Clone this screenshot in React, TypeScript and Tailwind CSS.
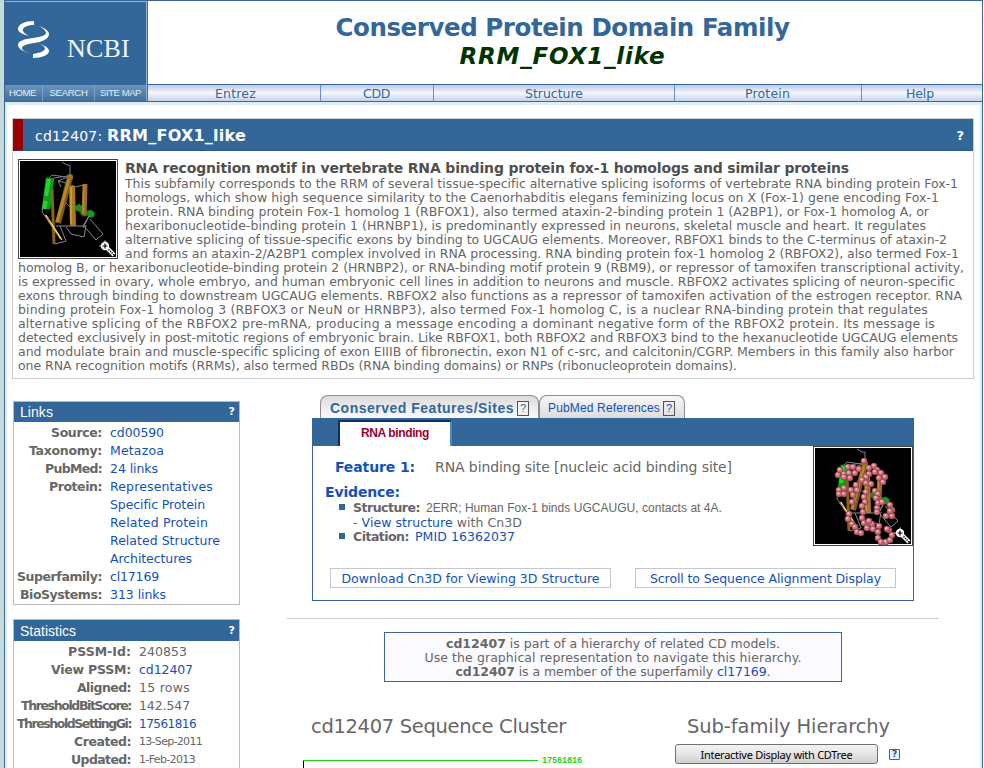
import { useLayoutEffect, useRef, type ReactNode } from "react";

/** Single line of text tracked out (or in) so that it spans `w` pixels. */
function Fit({ w, className = "", children }: { w: number; className?: string; children: ReactNode }) {
  const ref = useRef<HTMLSpanElement>(null);
  useLayoutEffect(() => {
    const el = ref.current;
    if (!el) return;
    el.style.letterSpacing = "normal";
    const natural = el.getBoundingClientRect().width;
    const count = (el.textContent ?? "").length;
    el.style.letterSpacing = `${(w - natural) / count}px`;
  }, [w]);
  return (
    <span ref={ref} className={"inline-block whitespace-pre " + className}>
      {children}
    </span>
  );
}

const nav: [string, number, string][] = [
  ["Entrez", 41, "w-[173px] pl-[3px]"],
  ["CDD", 27, "w-[113px] pr-px"],
  ["Structure", 58, "w-[241px]"],
  ["Protein", 45, "w-[187px] pr-px"],
  ["Help", 28, "w-[120px] pr-[4px]"],
];

const besideThumb: [string, number][] = [
  ["This subfamily corresponds to the RRM of several tissue-specific alternative splicing isoforms of vertebrate RNA binding protein Fox-1", 833],
  ["homologs, which show high sequence similarity to the Caenorhabditis elegans feminizing locus on X (Fox-1) gene encoding Fox-1", 814],
  ["protein. RNA binding protein Fox-1 homolog 1 (RBFOX1), also termed ataxin-2-binding protein 1 (A2BP1), or Fox-1 homolog A, or", 804],
  ["hexaribonucleotide-binding protein 1 (HRNBP1), is predominantly expressed in neurons, skeletal muscle and heart. It regulates", 801],
  ["alternative splicing of tissue-specific exons by binding to UGCAUG elements. Moreover, RBFOX1 binds to the C-terminus of ataxin-2", 822],
  ["and forms an ataxin-2/A2BP1 complex involved in RNA processing. RNA binding protein fox-1 homolog 2 (RBFOX2), also termed Fox-1", 834],
];

const belowThumb: [string, number][] = [
  ["homolog B, or hexaribonucleotide-binding protein 2 (HRNBP2), or RNA-binding motif protein 9 (RBM9), or repressor of tamoxifen transcriptional activity,", 946],
  ["is expressed in ovary, whole embryo, and human embryonic cell lines in addition to neurons and muscle. RBFOX2 activates splicing of neuron-specific", 937],
  ["exons through binding to downstream UGCAUG elements. RBFOX2 also functions as a repressor of tamoxifen activation of the estrogen receptor. RNA", 944],
  ["binding protein Fox-1 homolog 3 (RBFOX3 or NeuN or HRNBP3), also termed Fox-1 homolog C, is a nuclear RNA-binding protein that regulates", 910],
  ["alternative splicing of the RBFOX2 pre-mRNA, producing a message encoding a dominant negative form of the RBFOX2 protein. Its message is", 917],
  ["detected exclusively in post-mitotic regions of embryonic brain. Like RBFOX1, both RBFOX2 and RBFOX3 bind to the hexanucleotide UGCAUG elements", 940],
  ["and modulate brain and muscle-specific splicing of exon EIIIB of fibronectin, exon N1 of c-src, and calcitonin/CGRP. Members in this family also harbor", 936],
  ["one RNA recognition motifs (RRMs), also termed RBDs (RNA binding domains) or RNPs (ribonucleoprotein domains).", 719],
];

const links: [string, number, string, number][] = [
  ["Source:", 51, "cd00590", 54],
  ["Taxonomy:", 73, "Metazoa", 54],
  ["PubMed:", 57, "24 links", 48],
  ["Protein:", 53, "Representatives", 103],
  ["", 0, "Specific Protein", 95],
  ["", 0, "Related Protein", 98],
  ["", 0, "Related Structure", 110],
  ["", 0, "Architectures", 82],
  ["Superfamily:", 85, "cl17169", 49],
  ["BioSystems:", 82, "313 links", 56],
];

const stats: [string, number, string, number, string][] = [
  ["PSSM-Id:", 63, "240853", 48, "text-[12.5px] text-[#666]"],
  ["View PSSM:", 80, "cd12407", 54, "text-[12.5px] text-[#1450b8]"],
  ["Aligned:", 54, "15 rows", 51, "text-[12.5px] text-[#666]"],
  ["ThresholdBitScore:", 110, "142.547", 51, "text-[12.5px] text-[#666]"],
  ["ThresholdSettingGi:", 114, "17561816", 57, "text-[12px] text-[#1450b8]"],
  ["Created:", 57, "13-Sep-2011", 63, "text-[11px] text-[#666]"],
  ["Updated:", 60, "1-Feb-2013", 56, "text-[11px] text-[#666]"],
];

function Magnifier() {
  return (
    <g>
      <path d="M89 89 L96 96" stroke="#fff" strokeWidth="4" />
      <path d="M89 89 L96 96" stroke="#000" strokeWidth="1.6" strokeDasharray="1.2 1" />
      <circle cx="87" cy="87" r="4.2" fill="#fff" />
      <path d="M84.5 87h5M87 84.5v5" stroke="#000" strokeWidth="1.2" />
      <path d="M87 81.5v1.5M81.5 87h1.5" stroke="#fff" />
    </g>
  );
}

function Frame({ children }: { children: ReactNode }) {
  return (
    <svg width="100" height="100" viewBox="0 0 100 100" className="block shrink-0">
      <rect width="100" height="100" fill="#444" />
      <rect x="1" y="1" width="98" height="98" fill="#fff" />
      <rect x="2" y="2" width="96" height="96" fill="#000" />
      {children}
      <Magnifier />
    </svg>
  );
}

function Ribbon() {
  return (
    <g fill="none" strokeLinejoin="round">
      <path d="M44 3L49 6L52 6L52 17M50 17L36 19L29 23M48 18L34 16L31 19M50 18L40 22L43 28M40 22L48 24L58 28L65 26M48 44L54 50L60 47" stroke="#7d818b" />
      <path d="M32 19L28 50" stroke="#0f9c1a" strokeWidth="8.5" />
      <path d="M31 20L28 37M28 42L26 50" stroke="#22d62f" strokeWidth="4" />
      <path d="M59 46L66 55L74 53" stroke="#0f7a17" strokeWidth="5" />
      <circle cx="73" cy="55" r="3.5" fill="#159920" />
      <circle cx="61" cy="49" r="3.5" fill="#148d1e" />
      <path d="M52 18L40 64" stroke="#7f5b16" strokeWidth="6" />
      <path d="M51 20L39 63" stroke="#b98630" strokeWidth="3" />
      <path d="M54 27L55 67" stroke="#a97921" strokeWidth="6" />
      <path d="M53 28V65" stroke="#c9933c" strokeWidth="2" />
      <path d="M67 25L66 56" stroke="#a07020" strokeWidth="5" />
      <path d="M66 26L65 54" stroke="#c48f3c" />
      <path d="M34 30L36 85" stroke="#8b6219" strokeWidth="3" />
      <circle cx="52" cy="18" r="3" fill="#9c741d" />
      <path d="M27 56L43 80" stroke="#c79b36" strokeWidth="2" />
      <path d="M28 56L44 81" stroke="#ffe9a0" />
      <path d="M26 42L24 53L29 60M26 56L31 61M38 67L65 67L71 57L65 69M48 68L53 75L66 78L68 66M72 60L85 75L78 81L65 66M42 67L48 82L37 85" stroke="#85898f" />
    </g>
  );
}

const beads: [number, number][] = [
  [51, 15], [27, 24], [35, 21], [40, 21], [25, 29], [31, 28], [36, 27], [42, 27], [46, 23], [37, 32], [31, 31], [56, 22], [61, 20], [64, 24], [68, 27], [56, 28], [62, 26], [66, 32],
  [53, 31], [49, 34], [53, 37], [58, 38], [72, 31], [70, 36], [26, 44], [31, 42], [26, 48], [31, 48], [43, 39], [38, 44], [44, 44], [40, 49], [53, 46], [51, 51], [52, 56], [62, 45], [65, 48], [63, 52],
  [39, 56], [49, 60], [50, 66], [65, 57], [69, 56], [64, 62], [64, 66], [36, 68], [35, 73], [49, 72], [51, 77], [39, 78], [42, 81], [44, 86], [48, 87], [55, 77], [59, 78], [54, 82], [60, 83],
  [66, 80], [65, 86], [65, 92], [68, 96], [73, 96], [77, 94], [79, 89], [76, 84], [74, 83], [77, 59], [79, 64], [73, 70], [79, 70], [77, 65], [56, 75],
];

function Thumb() {
  return (
    <Frame>
      <Ribbon />
    </Frame>
  );
}

function BeadThumb() {
  return (
    <Frame>
      <Ribbon />
      {beads.map(([x, y], i) => (
        <g key={i}>
          <circle cx={x} cy={y} r="3.3" fill="#8a4248" />
          <circle cx={x - 0.2} cy={y - 0.2} r="2.6" fill="#c86c75" />
          <circle cx={x - 0.6} cy={y - 0.7} r="1.2" fill="#f0b2b7" />
        </g>
      ))}
    </Frame>
  );
}

function Logo() {
  return (
    <div className="flex h-[83px] items-start">
      <svg width="34" height="40" viewBox="0 0 34 40" className="mt-[18px] ml-[12px] shrink-0" fill="#fff">
        <path d="M17 1C8 1 1 4 1 9C1 12 5 14 12 16C7 13 5 11 6 9C8 6 12 5 17 5Z" />
        <path d="M22 6C30 9 32 12 32 14C32 19 25 22 17 23C9 24 5 26 5 28C5 30 7 31 12 33C5 31 1 28 1 25C1 21 7 19 16 18C24 17 29 15 29 13C29 11 27 9 22 6Z" />
        <path d="M22 24C30 26 32 29 32 31C32 35 25 38 16 38V34C23 33 27 31 28 29C28 27 26 25 22 24Z" />
      </svg>
      <div className="mt-[33px] ml-[16px] font-['Liberation_Serif','Times_New_Roman',serif] text-[26px] leading-[28px] text-[#f0f6fb]">
        <Fit w={63}>NCBI</Fit>
      </div>
    </div>
  );
}

function SideHeader({ title, w }: { title: string; w: number }) {
  return (
    <div className="flex h-5 items-center justify-between bg-[#336699] pr-1 pl-1.5 text-white">
      <span className="font-['Liberation_Sans',Arial,sans-serif] text-[14px] leading-5">
        <Fit w={w}>{title}</Fit>
      </span>
      <span className="text-[11px] leading-5 font-bold">?</span>
    </div>
  );
}

export default function App() {
  return (
    <div className="flex h-[768px] w-[984px] overflow-hidden bg-white font-['DejaVu_Sans',Verdana,sans-serif] text-[#666]">
      <div className="w-[4px] shrink-0 bg-[#c5dadb]" />
      <div className="flex w-[979px] shrink-0 flex-col border-x border-t border-[#3c6498]">
        <header className="flex h-[101px] shrink-0 border-b border-[#3d65a0]">
          <div className="w-[142px] shrink-0 border-t border-r border-[#8db4d7] bg-[#336699]">
            <Logo />
            <div className="flex h-4 divide-x divide-[#7da0c5] bg-linear-to-b from-[#6c95bd] to-[#40709f] font-['Liberation_Sans',Arial,sans-serif] text-[9.5px] leading-[15px] text-[#e2edf6]">
              <div className="w-[38px] pr-[2px] text-center"><Fit w={27}>HOME</Fit></div>
              <div className="w-[52px] text-center"><Fit w={38}>SEARCH</Fit></div>
              <div className="w-[51px] text-center"><Fit w={41}>SITE MAP</Fit></div>
            </div>
          </div>
          <div className="flex flex-1 flex-col border-l border-[#3f6aa5]">
            <div className="flex h-[83px] flex-col items-center pt-[12px] pr-[5px] font-bold">
              <div className="h-7 text-[24.5px] leading-[30px] text-[#336699]">
                <Fit w={454}>Conserved Protein Domain Family</Fit>
              </div>
              <div className="h-7 text-[23px] leading-[31px] text-[#003300] italic">
                <Fit w={206}>RRM_FOX1_like</Fit>
              </div>
            </div>
            <nav className="flex h-[17px] divide-x divide-[#6d8fbd] border-t border-[#3d65a0] bg-linear-to-b from-[#b9cae8] via-[#f5f8fd] to-[#c3d1eb] text-[12.5px] leading-[18px] text-[#336699]">
              {nav.map(([label, w, width]) => (
                <div key={label} className={"text-center " + width}>
                  <Fit w={w}>{label}</Fit>
                </div>
              ))}
            </nav>
          </div>
        </header>

        <div className="flex flex-1 flex-col border-x-2 border-t-3 border-[#deeeee] pl-[5px]">
          <section className="mt-[13px] h-[261px] w-[962px] border border-[#ccc]">
            <div className="flex h-[32px] items-center border-b border-[#2d5b8c] border-l-10 border-l-[#990000] bg-[#336699] pt-[2px] pr-[9px] pl-[12px] text-white">
              <span className="text-[14px] leading-8"><Fit w={72}>cd12407: </Fit></span>
              <span className="text-[16px] leading-8 font-bold"><Fit w={139}>RRM_FOX1_like</Fit></span>
              <span className="ml-auto text-[13px] font-bold">?</span>
            </div>
            <div className="flex h-[108px] pt-[8px] pl-[5px]">
              <Thumb />
              <div className="pl-[7px] text-[12.5px] leading-[14px]">
                <div className="h-[18px] text-[14px] leading-[18px] font-bold text-[#4f4f4f]">
                  <Fit w={724}>RNA recognition motif in vertebrate RNA binding protein fox-1 homologs and similar proteins</Fit>
                </div>
                {besideThumb.map(([t, w]) => (
                  <div key={t} className="h-[14px]"><Fit w={w}>{t}</Fit></div>
                ))}
              </div>
            </div>
            <div className="pt-[2px] pl-[5px] text-[12.5px] leading-[14px]">
              {belowThumb.map(([t, w]) => (
                <div key={t} className="h-[14px]"><Fit w={w}>{t}</Fit></div>
              ))}
            </div>
          </section>

          <div className="flex pl-px">
            <aside className="w-[227px] shrink-0 pt-[22px]">
              <div className="h-[204px] border border-[#bbb]">
                <SideHeader title="Links" w={33} />
                <div className="pt-[2px]">
                  {links.map(([l, lw, v, vw], i) => (
                    <div key={i} className="flex h-[18px] text-[12.5px] leading-[18px]">
                      <div className="w-[88px] text-right font-bold">{l && <Fit w={lw}>{l}</Fit>}</div>
                      <div className="pl-2 text-[#1450b8]"><Fit w={vw}>{v}</Fit></div>
                    </div>
                  ))}
                </div>
              </div>
              <div className="mt-[14px] h-[160px] border border-[#bbb]">
                <div className="border-t border-[#336699]">
                  <SideHeader title="Statistics" w={56} />
                </div>
                <div className="pt-[2px]">
                  {stats.map(([l, lw, v, vw, c]) => (
                    <div key={l} className="flex h-[18px] leading-[18px]">
                      <div className="w-[117px] text-right text-[12.5px] font-bold"><Fit w={lw}>{l}</Fit></div>
                      <div className={"pl-2 leading-[18px] " + c}><Fit w={vw}>{v}</Fit></div>
                    </div>
                  ))}
                </div>
              </div>
            </aside>

            <main className="w-[700px] pt-[16px] pl-[47px]">
              <div className="ml-[25px] w-[602px]">
                <div className="flex h-[23px] pl-[8px] font-['Liberation_Sans',Arial,sans-serif]">
                  <div className="flex w-[219px] items-center rounded-t-[8px] border border-b-0 border-[#8d8d8d] bg-linear-to-b from-[#dcdcdc] to-[#fafafa] pt-[3px] pl-[9px] text-[14px] font-bold text-[#336699]">
                    <Fit w={184}>Conserved Features/Sites</Fit>
                    <span className="ml-[3px] h-[15px] w-[12px] border border-[#555] bg-[#f5f5f5] text-center text-[11px] leading-[13px] font-normal">?</span>
                  </div>
                  <div className="flex w-[146px] items-center rounded-t-[8px] border border-b-0 border-[#8d8d8d] bg-linear-to-b from-[#f8f8f8] to-[#dcdcdc] pt-[2px] pl-[8px] text-[12px] text-[#1450b8]">
                    <Fit w={112}>PubMed References</Fit>
                    <span className="ml-[3px] h-[15px] w-[12px] border border-[#555] text-center text-[11px] leading-[13px]">?</span>
                  </div>
                </div>
                <div className="h-[183px] border border-t-0 border-[#3a5f9f]">
                  <div className="h-[28px] bg-[#336699] pt-[2px] pl-[25px]">
                    <div className="h-[26px] w-[114px] border-t-2 border-r-2 border-l-2 border-[#0b3061] border-r-[#4788c0] bg-white text-center font-['Liberation_Sans',Arial,sans-serif] text-[12px] leading-[22px] font-bold text-[#990033]">
                      <Fit w={68}>RNA binding</Fit>
                    </div>
                  </div>
                  <div className="flex">
                    <div className="w-[500px] pt-[11px]">
                      <div className="flex h-5 pl-[22px] text-[14px] leading-5">
                        <span className="w-[100px] font-bold text-[#1452b8]"><Fit w={80}>Feature 1:</Fit></span>
                        <span><Fit w={297}>RNA binding site [nucleic acid binding site]</Fit></span>
                      </div>
                      <div className="mt-[5px] h-5 pl-[12px] text-[14px] leading-5 font-bold text-[#1452b8]">
                        <Fit w={75}>Evidence:</Fit>
                      </div>
                      <div className="flex pl-[26px] text-[12.5px] leading-[14px]">
                        <div className="w-[14px]">
                          <div className="mt-[2px] h-[6px] w-[6px] bg-[#336699]" />
                          <div className="mt-[23px] h-[6px] w-[6px] bg-[#336699]" />
                        </div>
                        <div>
                          <div className="flex h-[14px] leading-[12px]">
                            <b className="w-[73px]"><Fit w={67}>Structure:</Fit></b>
                            <span className="font-['Liberation_Sans',Arial,sans-serif] text-[12px]"><Fit w={296}>2ERR; Human Fox-1 binds UGCAUGU, contacts at 4A.</Fit></span>
                          </div>
                          <div className="h-[14px]">
                            <Fit w={169}>- <span className="text-[#1450b8]">View structure</span> with Cn3D</Fit>
                          </div>
                          <div className="flex h-[14px]">
                            <b className="w-[62px]"><Fit w={56}>Citation:</Fit></b>
                            <span className="text-[#1450b8]"><Fit w={100}>PMID 16362037</Fit></span>
                          </div>
                        </div>
                      </div>
                    </div>
                    <BeadThumb />
                  </div>
                  <div className="mt-[22px] flex gap-[24px] pl-[17px] text-[12.5px] leading-[20px] text-[#1450b8]">
                    <div className="h-5 w-[281px] border border-[#c5c5d5] text-center"><Fit w={258}>Download Cn3D for Viewing 3D Structure</Fit></div>
                    <div className="h-5 w-[261px] border border-[#c5c5d5] text-center"><Fit w={231}>Scroll to Sequence Alignment Display</Fit></div>
                  </div>
                </div>
              </div>

              <div className="mt-[17px] h-px w-[652px] bg-[#ccc]" />

              <div className="mt-[13px] ml-[97px] h-[50px] w-[458px] border border-[#3f6593] bg-[#fbfaff] pt-[4px] text-center text-[12.5px] leading-[14px]">
                <div className="h-[14px]"><Fit w={334}><b>cd12407</b> is part of a hierarchy of related CD models.</Fit></div>
                <div className="h-[14px]"><Fit w={377}>Use the graphical representation to navigate this hierarchy.</Fit></div>
                <div className="h-[14px]"><Fit w={315}><b>cd12407</b> is a member of the superfamily <span className="text-[#1450b8]">cl17169</span>.</Fit></div>
              </div>

              <div className="mt-[33px] flex">
                <div className="w-[388px] shrink-0">
                  <h2 className="h-6 pl-[24px] text-[19.5px] leading-6"><Fit w={255}>cd12407 Sequence Cluster</Fit></h2>
                  <div className="mt-[16px] ml-[16px] flex">
                    <svg width="236" height="14" className="mt-[5px] block">
                      <path d="M0 .5H235" stroke="#18d018" />
                      <path d="M.5 1V14" stroke="#000" />
                    </svg>
                    <span className="ml-[3px] font-['Liberation_Mono',monospace] text-[8.5px] leading-[12px] font-bold text-[#22d022]"><Fit w={40}>17561816</Fit></span>
                  </div>
                </div>
                <div className="w-[240px] shrink-0">
                  <h2 className="h-6 pl-[12px] text-[19.5px] leading-6"><Fit w={203}>Sub-family Hierarchy</Fit></h2>
                  <div className="mt-[5px] flex items-center gap-[11px]">
                    <button className="h-5 w-[203px] rounded-[3px] border border-[#707070] bg-linear-to-b from-[#f2f2f2] via-[#e6e6e6] to-[#cfcfcf] font-['Noto_Sans',sans-serif] text-[11px] leading-[20px] text-black">
                      <Fit w={152}>Interactive Display with CDTree</Fit>
                    </button>
                    <span className="h-[11px] w-[11px] rounded-[1px] border border-[#336699] bg-[#e8f2fb] text-center text-[9px] leading-[9px] font-bold text-[#24588e]">?</span>
                  </div>
                </div>
              </div>
            </main>
          </div>
        </div>
      </div>
    </div>
  );
}
